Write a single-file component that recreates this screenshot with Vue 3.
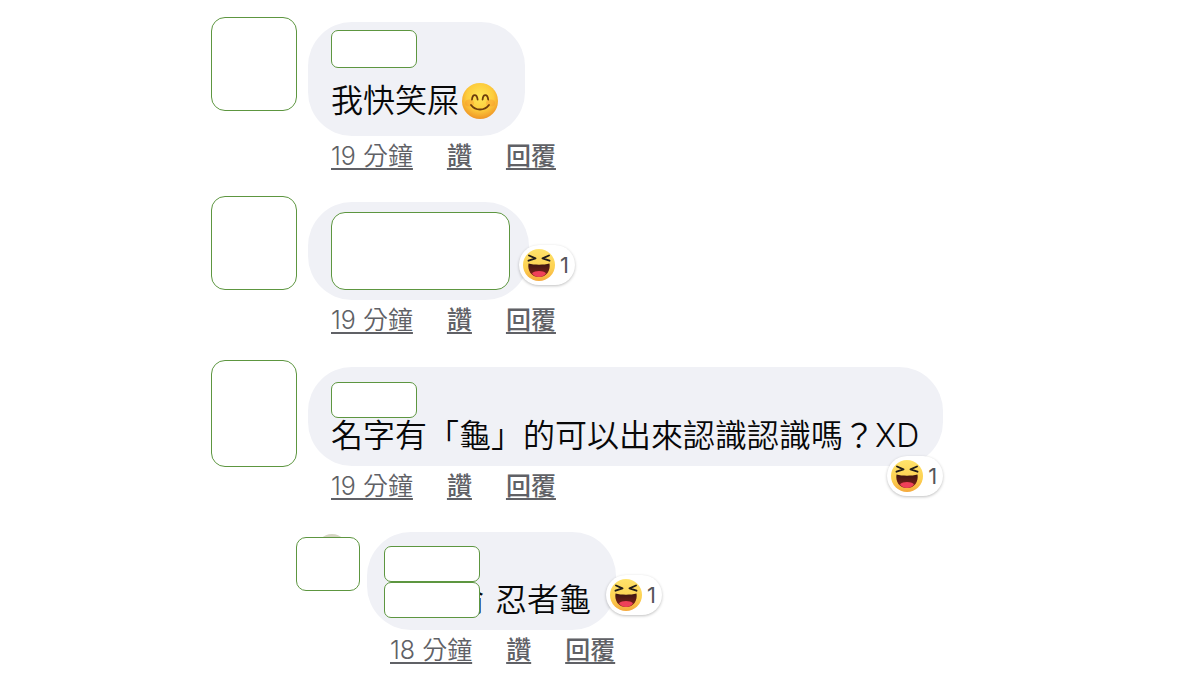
<script setup>
const comments = [
  { id: 'first', text: '我快笑屎', smile: true, age: '19 分鐘' },
  { id: 'second', age: '19 分鐘', reactions: 1 },
  { id: 'third', text: '名字有「龜」的可以出來認識認識嗎？XD', age: '19 分鐘', reactions: 1 },
  { id: 'reply', mention: '倫', text: '忍者龜', age: '18 分鐘', reactions: 1 },
]
</script>

<template>
  <main class="thread">
    <article v-for="c in comments" :key="c.id" class="comment" :class="c.id">
      <div class="avatar-slot"><div class="mask avatar"></div></div>
      <div class="body">
        <div class="bubble">
          <div class="mask name"></div>
          <p v-if="c.text" class="text">
            <template v-if="c.mention"><span class="mask mention-mask"></span><span class="mention">{{ c.mention }}</span></template>
            <span>{{ c.text }}</span>
            <svg v-if="c.smile" class="smile" viewBox="0 0 36 36" role="img" aria-label="微笑">
              <defs>
                <radialGradient id="smile-face" cx="50%" cy="38%" r="62%">
                  <stop offset="0" stop-color="#ffe756" />
                  <stop offset=".6" stop-color="#fdcc3c" />
                  <stop offset="1" stop-color="#ef9526" />
                </radialGradient>
              </defs>
              <circle cx="18" cy="18" r="18" fill="url(#smile-face)" />
              <ellipse cx="7.5" cy="20" rx="4.5" ry="3.5" fill="#f58a2c" opacity=".35" />
              <ellipse cx="28.5" cy="20" rx="4.5" ry="3.5" fill="#f58a2c" opacity=".35" />
              <path d="M10 16.500c.5-5.800 4.900-5.800 5.600 0M20.600 16.500c.5-5.800 4.900-5.800 5.600 0M9 22c4.500 6 13.500 6 18 0" fill="none" stroke="#6d3c0c" stroke-width="1.800" stroke-linecap="round" />
            </svg>
          </p>
          <button v-if="c.reactions" type="button" class="reaction">
            <svg class="haha" viewBox="0 0 32 32" role="img" aria-label="哈">
              <defs>
                <linearGradient :id="'face-' + c.id" x1="0" y1="0" x2="0" y2="1">
                  <stop offset="0" stop-color="#ffe36b" />
                  <stop offset=".6" stop-color="#fdd151" />
                  <stop offset="1" stop-color="#f5a93c" />
                </linearGradient>
                <linearGradient :id="'mouth-' + c.id" x1="0" y1="0" x2="0" y2="1">
                  <stop offset="0" stop-color="#3b1512" />
                  <stop offset="1" stop-color="#872318" />
                </linearGradient>
              </defs>
              <circle cx="16" cy="16" r="16" :fill="'url(#face-' + c.id + ')'" />
              <path d="M5.500 14.500c3 .8 6.500 1.200 10.500 1.200s7.500-.4 10.500-1.200c1.200 7-2.800 13.500-10.500 13.500S4.300 21.500 5.500 14.500z" :fill="'url(#mouth-' + c.id + ')'" />
              <path d="M9 24.300c3-3.200 11-3.200 14 0-1.700 2.500-4 3.700-7 3.700s-5.300-1.200-7-3.700z" fill="#ef4059" />
              <path d="M6 6.500l6.500 2.900-7 2.300M26 6.500l-6.500 2.900 7 2.300" fill="none" stroke="#211c1b" stroke-width="1.900" stroke-linecap="round" stroke-linejoin="round" />
            </svg>
            <span>{{ c.reactions }}</span>
          </button>
        </div>
        <nav class="actions">
          <a href="#" class="age">{{ c.age }}</a>
          <a href="#">讚</a>
          <a href="#">回覆</a>
        </nav>
      </div>
    </article>
  </main>
</template>

<style>
body {
  margin: 0;
  background: #fff;
}
</style>

<style scoped>
.thread {
  display: flex;
  flex-direction: column;
  gap: 20px;
  padding: 17px 24px 0 211px;
  font-family: Inter, "Noto Sans CJK TC", sans-serif;
  color: #080809;
}

.comment {
  display: flex;
  align-items: flex-start;
  gap: 11px;
}

.mask {
  box-sizing: border-box;
  background: #fff;
  border: 1px solid #5d9640;
  border-radius: 7px;
}

.avatar-slot {
  position: relative;
  flex: none;
}

.avatar {
  position: relative;
  width: 86px;
  height: 94px;
  border-radius: 14px;
}

.third .avatar {
  height: 107px;
}

.body {
  display: flex;
  flex-direction: column;
  align-items: flex-start;
  padding-top: 6px;
}

.first .body {
  padding-top: 5px;
}

.third .body {
  padding-top: 7px;
}

.bubble {
  position: relative;
  padding: 15px 24px 12px 23px;
  border-radius: 44px;
  background: #f0f1f6;
}

.name {
  width: 86px;
  height: 36px;
}

.first .bubble {
  padding: 8px 27px 17px 23px;
}

.first .name {
  height: 38px;
  margin-bottom: 15px;
}

.second .bubble {
  padding: 10px 19px 10px 23px;
}

.second .name {
  width: 179px;
  height: 78px;
  border-radius: 14px;
}

.text {
  display: flex;
  align-items: center;
  margin: 0;
  font-size: 32px;
  line-height: 36px;
  font-weight: 350;
  white-space: nowrap;
}

.smile {
  width: 36px;
  height: 36px;
  margin-left: 3px;
}

.reaction {
  position: absolute;
  left: calc(100% - 10px);
  bottom: 15px;
  display: flex;
  align-items: center;
  gap: 5px;
  width: 56px;
  height: 40px;
  padding: 0 4px;
  border: 0;
  border-radius: 20px;
  background: #fff;
  box-shadow: 0 1px 3px rgba(0, 0, 0, 0.25);
  color: #55565a;
  font: 22px/40px Inter, sans-serif;
}

.third .reaction {
  left: auto;
  right: 0;
  bottom: -30px;
}

.haha {
  flex: none;
  width: 32px;
  height: 32px;
}

.actions {
  display: flex;
  gap: 34px;
  height: 40px;
  margin-left: 23px;
  font-size: 25px;
  line-height: 40px;
  font-weight: 500;
}

.actions a {
  color: #606166;
  text-decoration: underline;
  text-decoration-thickness: 2px;
  text-underline-offset: 3px;
}

.actions .age {
  font-weight: 350;
}

.reply {
  margin: 6px 0 0 85px;
  gap: 7px;
}

.reply .avatar-slot {
  padding-top: 5px;
}

.reply .avatar-slot::before {
  content: "";
  position: absolute;
  top: 2px;
  left: 20px;
  width: 32px;
  height: 32px;
  border-radius: 16px;
  background: #d5d5c4;
}

.reply .avatar {
  width: 64px;
  height: 54px;
  border-radius: 10px;
}

.reply .body {
  padding-top: 0;
}

.reply .bubble {
  padding: 14px 25px 12px 17px;
}

.reply .name {
  width: 96px;
}

.mention-mask {
  position: relative;
  flex: none;
  width: 96px;
  height: 36px;
}

.mention {
  margin: 0 11px 0 -28px;
}
</style>
